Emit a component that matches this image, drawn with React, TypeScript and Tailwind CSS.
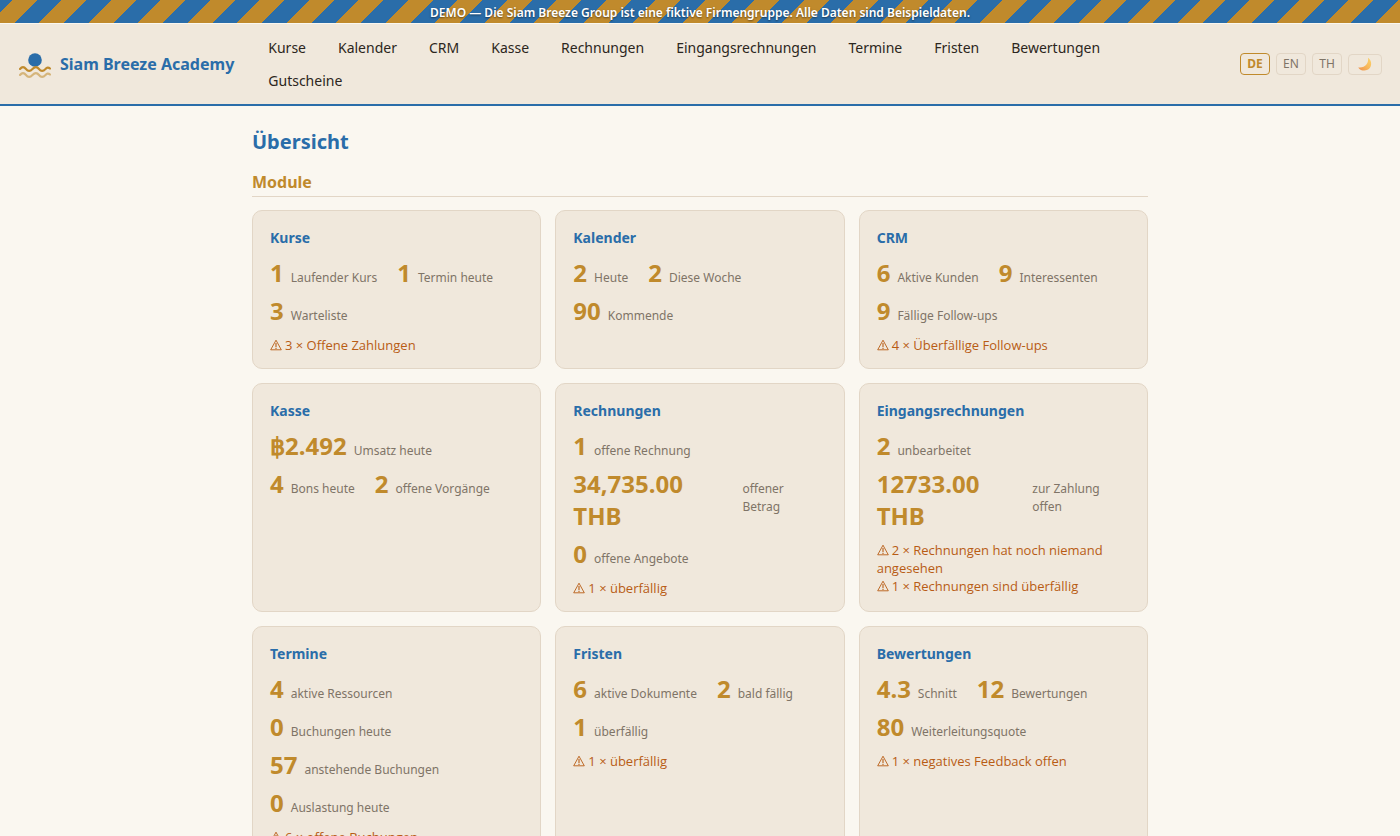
import React, { useState } from 'react';

interface Stat {
  value: string;
  label: string;
}

interface Module {
  title: string;
  stats: Stat[];
  alerts?: string[];
}

const navItems = [
  'Kurse',
  'Kalender',
  'CRM',
  'Kasse',
  'Rechnungen',
  'Eingangsrechnungen',
  'Termine',
  'Fristen',
  'Bewertungen',
  'Gutscheine',
];

const languages = ['DE', 'EN', 'TH'];

const modules: Module[] = [
  {
    title: 'Kurse',
    stats: [
      { value: '1', label: 'Laufender Kurs' },
      { value: '1', label: 'Termin heute' },
      { value: '3', label: 'Warteliste' },
    ],
    alerts: ['3 × Offene Zahlungen'],
  },
  {
    title: 'Kalender',
    stats: [
      { value: '2', label: 'Heute' },
      { value: '2', label: 'Diese Woche' },
      { value: '90', label: 'Kommende' },
    ],
  },
  {
    title: 'CRM',
    stats: [
      { value: '6', label: 'Aktive Kunden' },
      { value: '9', label: 'Interessenten' },
      { value: '9', label: 'Fällige Follow-ups' },
    ],
    alerts: ['4 × Überfällige Follow-ups'],
  },
  {
    title: 'Kasse',
    stats: [
      { value: '฿2.492', label: 'Umsatz heute' },
      { value: '4', label: 'Bons heute' },
      { value: '2', label: 'offene Vorgänge' },
    ],
  },
  {
    title: 'Rechnungen',
    stats: [
      { value: '1', label: 'offene Rechnung' },
      { value: '34,735.00 THB', label: 'offener Betrag' },
      { value: '0', label: 'offene Angebote' },
    ],
    alerts: ['1 × überfällig'],
  },
  {
    title: 'Eingangsrechnungen',
    stats: [
      { value: '2', label: 'unbearbeitet' },
      { value: '12733.00 THB', label: 'zur Zahlung offen' },
    ],
    alerts: ['2 × Rechnungen hat noch niemand angesehen', '1 × Rechnungen sind überfällig'],
  },
  {
    title: 'Termine',
    stats: [
      { value: '4', label: 'aktive Ressourcen' },
      { value: '0', label: 'Buchungen heute' },
      { value: '57', label: 'anstehende Buchungen' },
      { value: '0', label: 'Auslastung heute' },
    ],
    alerts: ['6 × offene Buchungen'],
  },
  {
    title: 'Fristen',
    stats: [
      { value: '6', label: 'aktive Dokumente' },
      { value: '2', label: 'bald fällig' },
      { value: '1', label: 'überfällig' },
    ],
    alerts: ['1 × überfällig'],
  },
  {
    title: 'Bewertungen',
    stats: [
      { value: '4.3', label: 'Schnitt' },
      { value: '12', label: 'Bewertungen' },
      { value: '80', label: 'Weiterleitungsquote' },
    ],
    alerts: ['1 × negatives Feedback offen'],
  },
];

function Logo() {
  return (
    <svg className="w-8 h-7 shrink-0" viewBox="0 0 32 28" fill="none" aria-hidden="true">
      <circle cx="16" cy="10" r="6.8" fill="#2a6da9" />
      <path
        d="M1 19q3-3.8 6 0t6.5 0 6.5 0 6.500 0q2.200-2.600 4.500-.4"
        stroke="#c08a2c"
        strokeWidth="2.1"
        strokeLinecap="round"
      />
      <path
        d="M1 25q3-3.800 6 0t6.500 0 6.500 0 6.500 0q2.200-2.600 4.500-.4"
        stroke="#c08a2c"
        strokeOpacity=".55"
        strokeWidth="2.1"
        strokeLinecap="round"
      />
    </svg>
  );
}

function WarningIcon() {
  return (
    <svg className="inline w-3 h-3 mr-[3px] align-[-1px]" viewBox="0 0 12 12" fill="none" stroke="currentColor" aria-hidden="true">
      <path d="M6 1.2 11.3 10.8H.7Z" strokeWidth=".9" strokeLinejoin="round" />
      <path d="M6 4v4M6 8.8v1.1" strokeWidth="1.1" />
    </svg>
  );
}

function MoonIcon() {
  return (
    <svg className="w-4 h-4" viewBox="0 0 16 16" aria-hidden="true">
      <defs>
        <linearGradient id="moon" x1="0" y1="1" x2="1" y2="0">
          <stop offset="0" stopColor="#ee9150" />
          <stop offset=".5" stopColor="#f8b95c" />
          <stop offset="1" stopColor="#fbd56c" />
        </linearGradient>
      </defs>
      <path
        d="M11 1.8C14.2 4 15.2 8.4 13 11.8 10.4 15.5 4 15.6 1.2 11.4 4.5 11.8 7.6 11 9.4 8.6 11 6.4 11.4 4.3 11 1.8Z"
        fill="url(#moon)"
      />
    </svg>
  );
}

function ModuleCard({ title, stats, alerts }: Module) {
  return (
    <a
      href="#"
      className="block rounded-[10px] border border-[#e2d6c6] bg-[#f0e8dc] py-3.5 pr-5 pl-[17px]"
    >
      <h3 className="mb-1.5 text-sm leading-[26px] font-bold text-[#2a6da9]">{title}</h3>
      <div className="flex flex-wrap gap-x-5 gap-y-1.5">
        {stats.map((stat) => (
          <div key={stat.label} className="flex items-baseline gap-[7px]">
            <span className="text-2xl leading-8 font-bold text-[#c08a2c]">{stat.value}</span>
            <span className="text-xs leading-[18px] text-[#7f7467]">{stat.label}</span>
          </div>
        ))}
      </div>
      {alerts && (
        <ul className="mt-[9px] font-['Open_Sans',sans-serif] text-[13px] leading-[18px] text-[#b85c14]">
          {alerts.map((alert) => (
            <li key={alert}>
              <WarningIcon />
              {alert}
            </li>
          ))}
        </ul>
      )}
    </a>
  );
}

export default function App() {
  const [lang, setLang] = useState('DE');

  return (
    <div className="min-h-screen bg-[#faf7f0] font-['Noto_Sans','Open_Sans',sans-serif] text-[#2c2620]">
      <div className="mb-px bg-[repeating-linear-gradient(-45deg,#c08a2c_0_calc(35px/2),#2a6da9_calc(35px/2)_35px)] pt-[3px] pb-px text-center text-xs leading-[19px] font-semibold text-white [text-shadow:0_1px_2px_rgba(0,0,0,0.5)]">
        DEMO — Die Siam Breeze Group ist eine fiktive Firmengruppe. Alle Daten sind Beispieldaten.
      </div>

      <header className="flex items-center gap-[34px] border-b-2 border-[#2a6da9] bg-[#f0e8dc] py-[7px] pr-[18px] pl-[19px]">
        <a href="#" className="flex shrink-0 items-center gap-[9px] text-base font-bold text-[#2a6da9]">
          <Logo />
          Siam Breeze Academy
        </a>
        <nav className="flex flex-1 flex-wrap gap-x-8 pr-4">
          {navItems.map((item) => (
            <a key={item} href="#" className="text-sm leading-[33px]">
              {item}
            </a>
          ))}
        </nav>
        <div className="flex items-center gap-1.5">
          {languages.map((code) => (
            <button
              key={code}
              onClick={() => setLang(code)}
              className={`w-[30px] rounded border text-xs leading-5 ${lang === code ? 'border-[#c08a2c] font-bold text-[#c08a2c]' : 'border-[#e2d6c6] text-[#7f7467]'}`}
            >
              {code}
            </button>
          ))}
          <button
            aria-label="Dunkelmodus"
            className="flex h-[21px] w-[34px] items-center justify-center rounded border border-[#e2d6c6]"
          >
            <MoonIcon />
          </button>
        </div>
      </header>

      <main className="mx-auto max-w-4xl py-5">
        <h1 className="text-xl leading-8 font-bold text-[#2a6da9]">Übersicht</h1>
        <h2 className="mt-2.5 mb-[13px] border-b border-[#e2d6c6] text-base leading-7 font-bold text-[#c08a2c]">
          Module
        </h2>
        <div className="grid grid-cols-3 gap-3.5">
          {modules.map((module) => (
            <ModuleCard key={module.title} {...module} />
          ))}
        </div>
      </main>
    </div>
  );
}
